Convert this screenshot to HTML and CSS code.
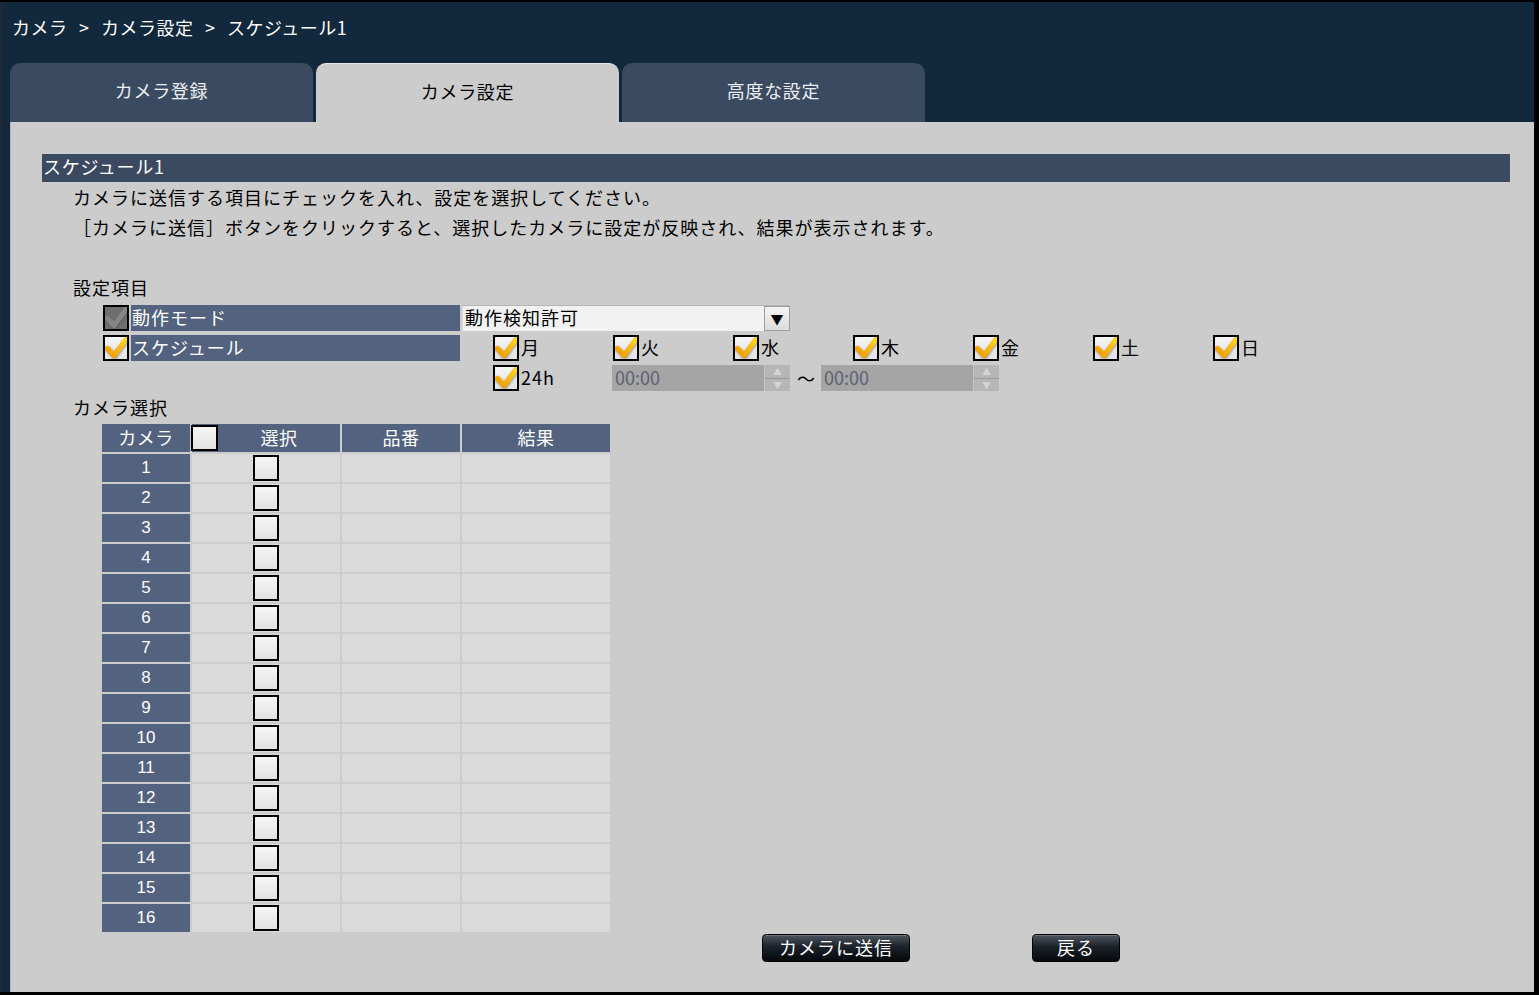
FILE: index.html
```html
<!DOCTYPE html>
<html lang="ja">
<head>
<meta charset="UTF-8">
<title>スケジュール1</title>
<link rel="stylesheet" href="styles.css">
</head>
<body>
<svg class="defs" width="0" height="0">
 <defs>
  <linearGradient id="ck-grad" x1="0" y1="1" x2="1" y2="0">
   <stop offset="0" stop-color="#f09a00"/>
   <stop offset="1" stop-color="#ffd41f"/>
  </linearGradient>
  <filter id="ck-blur" x="-20%" y="-20%" width="140%" height="140%"><feGaussianBlur stdDeviation="1"/></filter>
  <symbol id="check" viewBox="0 0 22 22">
   <path d="M2.5 11.5 L9 18.5 L21 2.5" fill="none" stroke="#000" stroke-opacity=".35" stroke-width="5.4" stroke-linecap="round" stroke-linejoin="round" filter="url(#ck-blur)" transform="translate(.6 1)"/>
   <path d="M2.5 11.5 L9 18.5 L21 2.5" fill="none" stroke="url(#ck-grad)" stroke-width="5.2" stroke-linecap="round" stroke-linejoin="round"/>
  </symbol>
  <symbol id="check-dis" viewBox="0 0 22 22">
   <path d="M2.5 11.5 L9 18.5 L21 2.5" fill="none" stroke="#000" stroke-opacity=".2" stroke-width="5.4" stroke-linecap="round" stroke-linejoin="round" filter="url(#ck-blur)" transform="translate(.6 1)"/>
   <path d="M2.5 11.5 L9 18.5 L21 2.5" fill="none" stroke="#868686" stroke-width="5.2" stroke-linecap="round" stroke-linejoin="round"/>
  </symbol>
 </defs>
</svg>
<div class="screen">
 <div class="app">
  <div class="header">
   <div class="breadcrumb">カメラ &gt; カメラ設定 &gt; スケジュール1</div>
   <div class="tabs">
    <div class="tab">カメラ登録</div>
    <div class="tab active">カメラ設定</div>
    <div class="tab">高度な設定</div>
   </div>
  </div>

  <div class="content">
   <div class="section-title">スケジュール1</div>
   <div class="desc">
    <div>カメラに送信する項目にチェックを入れ、設定を選択してください。</div>
    <div>［カメラに送信］ボタンをクリックすると、選択したカメラに設定が反映され、結果が表示されます。</div>
   </div>

   <div class="group-label first">設定項目</div>
   <div class="set-grid">
    <span class="cb dis"><svg><use href="#check-dis"/></svg></span>
    <div class="set-name">動作モード</div>
    <div class="select">
     <span class="select-text">動作検知許可</span>
     <span class="select-btn">▼</span>
    </div>

    <span class="cb"><svg><use href="#check"/></svg></span>
    <div class="set-name">スケジュール</div>
    <div class="days">
     <div class="day"><span class="cb"><svg><use href="#check"/></svg></span><span class="day-text">月</span></div>
     <div class="day"><span class="cb"><svg><use href="#check"/></svg></span><span class="day-text">火</span></div>
     <div class="day"><span class="cb"><svg><use href="#check"/></svg></span><span class="day-text">水</span></div>
     <div class="day"><span class="cb"><svg><use href="#check"/></svg></span><span class="day-text">木</span></div>
     <div class="day"><span class="cb"><svg><use href="#check"/></svg></span><span class="day-text">金</span></div>
     <div class="day"><span class="cb"><svg><use href="#check"/></svg></span><span class="day-text">土</span></div>
     <div class="day"><span class="cb"><svg><use href="#check"/></svg></span><span class="day-text">日</span></div>
    </div>

    <div class="days times">
     <div class="day"><span class="cb"><svg><use href="#check"/></svg></span><span class="day-text">24h</span></div>
     <div class="time">
      <span class="time-text">00:00</span>
      <span class="spin"><span class="spin-up">▲</span><span class="spin-down">▼</span></span>
     </div>
     <span class="tilde">～</span>
     <div class="time">
      <span class="time-text">00:00</span>
      <span class="spin"><span class="spin-up">▲</span><span class="spin-down">▼</span></span>
     </div>
    </div>
   </div>

   <div class="group-label">カメラ選択</div>
   <div class="cam-table">
    <div class="th">カメラ</div>
    <div class="th th-select"><span class="cb"></span><span class="th-text">選択</span></div>
    <div class="th">品番</div>
    <div class="th">結果</div>

    <div class="td-no">1</div><div class="td td-cb"><span class="cb"></span></div><div class="td"></div><div class="td"></div>
    <div class="td-no">2</div><div class="td td-cb"><span class="cb"></span></div><div class="td"></div><div class="td"></div>
    <div class="td-no">3</div><div class="td td-cb"><span class="cb"></span></div><div class="td"></div><div class="td"></div>
    <div class="td-no">4</div><div class="td td-cb"><span class="cb"></span></div><div class="td"></div><div class="td"></div>
    <div class="td-no">5</div><div class="td td-cb"><span class="cb"></span></div><div class="td"></div><div class="td"></div>
    <div class="td-no">6</div><div class="td td-cb"><span class="cb"></span></div><div class="td"></div><div class="td"></div>
    <div class="td-no">7</div><div class="td td-cb"><span class="cb"></span></div><div class="td"></div><div class="td"></div>
    <div class="td-no">8</div><div class="td td-cb"><span class="cb"></span></div><div class="td"></div><div class="td"></div>
    <div class="td-no">9</div><div class="td td-cb"><span class="cb"></span></div><div class="td"></div><div class="td"></div>
    <div class="td-no">10</div><div class="td td-cb"><span class="cb"></span></div><div class="td"></div><div class="td"></div>
    <div class="td-no">11</div><div class="td td-cb"><span class="cb"></span></div><div class="td"></div><div class="td"></div>
    <div class="td-no">12</div><div class="td td-cb"><span class="cb"></span></div><div class="td"></div><div class="td"></div>
    <div class="td-no">13</div><div class="td td-cb"><span class="cb"></span></div><div class="td"></div><div class="td"></div>
    <div class="td-no">14</div><div class="td td-cb"><span class="cb"></span></div><div class="td"></div><div class="td"></div>
    <div class="td-no">15</div><div class="td td-cb"><span class="cb"></span></div><div class="td"></div><div class="td"></div>
    <div class="td-no">16</div><div class="td td-cb"><span class="cb"></span></div><div class="td"></div><div class="td"></div>
   </div>

   <div class="buttons">
    <button class="btn btn-send">カメラに送信</button>
    <button class="btn btn-back">戻る</button>
   </div>
  </div>
 </div>
</div>
</body>
</html>
```

FILE: styles.css
```css
* {
 box-sizing: border-box;
}
body {
 margin: 0;
 background: #000000;
 font-family: "Noto Sans CJK JP", "Noto Sans", sans-serif;
 font-size: 18px;
 letter-spacing: 1px;
 color: #000000;
}
.defs {
 position: absolute;
 width: 0;
 height: 0;
}
.screen {
 width: 1539px;
 height: 995px;
 padding: 2px 5px 3px 0;
}
.app {
 height: 100%;
 display: flex;
 flex-direction: column;
 background: #12283c;
 border-left: 3px solid #1e2a38;
}

/* header: breadcrumb and tabs */
.header {
 height: 120px;
 padding-left: 7px;
 display: flex;
 flex-direction: column;
}
.breadcrumb {
 height: 61px;
 padding: 14px 0 0 2px;
 line-height: 22px;
 letter-spacing: 0.5px;
 word-spacing: 7px;
 color: #ffffff;
}
.tabs {
 height: 59px;
 display: flex;
 gap: 3px;
}
.tab {
 width: 303px;
 display: flex;
 align-items: center;
 justify-content: center;
 padding-bottom: 5px;
 border-radius: 10px 10px 0 0;
 background: #3a4a60;
 color: #eceff4;
 letter-spacing: 0.7px;
}
.tab.active {
 background: #cccccc;
 color: #000000;
 border-top: 1px solid #e6e6e6;
}

/* content */
.content {
 flex: 1;
 margin-left: 7px;
 padding: 32px 24px 0 31px;
 background: #cccccc;
 border-left: 1px solid #a9bccd;
}
.section-title {
 height: 28px;
 line-height: 25px;
 padding: 0 0 3px 1px;
 background: #3b4a61;
 color: #ffffff;
 letter-spacing: 0.7px;
}
.desc {
 padding-left: 31px;
 margin-top: 1px;
}
.desc div {
 line-height: 28px;
 padding-bottom: 2px;
}
.group-label {
 padding-left: 31px;
 line-height: 28px;
 padding-bottom: 2px;
 margin-top: 2px;
}
.group-label.first {
 margin-top: 30px;
}

/* checkbox */
.cb {
 width: 26px;
 height: 26px;
 flex: none;
 display: inline-flex;
 align-items: center;
 justify-content: center;
 border: 2px solid #000000;
 background: linear-gradient(#f6f6f6, #e2e2e2);
}
.cb svg {
 width: 22px;
 height: 22px;
 overflow: visible;
}
.cb.dis {
 background: #6f6f6f;
}

/* setting items */
.set-grid {
 display: grid;
 grid-template-columns: 26px 329px 1fr;
 grid-auto-rows: 26px;
 column-gap: 2px;
 row-gap: 4px;
 padding-left: 61px;
 margin-top: 2px;
}
.set-name {
 height: 26px;
 line-height: 24px;
 padding: 0 0 2px 1px;
 background: #53627e;
 color: #ffffff;
}
.select {
 width: 328px;
 height: 26px;
 display: flex;
 background: #f2f2f2;
 border-top: 1px solid #b4b4b4;
 border-left: 1px solid #d8d8d8;
}
.select-text {
 flex: 1;
 line-height: 23px;
 padding-left: 2px;
}
.select-btn {
 width: 26px;
 display: flex;
 align-items: center;
 justify-content: center;
 background: linear-gradient(#f4f4f4, #dcdcdc);
 border: 1px solid #9c9c9c;
 font-size: 13px;
 letter-spacing: 0;
}
.days {
 height: 26px;
 display: flex;
 padding-left: 31px;
}
.times {
 grid-column: 3;
 align-items: center;
}
.day {
 width: 120px;
 height: 26px;
 display: flex;
 align-items: center;
}
.day-text {
 line-height: 24px;
 padding: 0 0 2px 2px;
}
.time {
 width: 178px;
 height: 26px;
 display: flex;
 margin-left: -1px;
 background: #a5a5a5;
}
.time-text {
 flex: 1;
 line-height: 24px;
 padding-left: 3px;
 color: #5d6171;
 letter-spacing: 0;
}
.spin {
 width: 26px;
 display: flex;
 flex-direction: column;
 background: #b6b6b6;
 border-left: 1px solid #c4c4c4;
}
.spin span {
 flex: 1;
 display: flex;
 align-items: center;
 justify-content: center;
 font-size: 9px;
 color: #d4d4d4;
 letter-spacing: 0;
}
.spin-up {
 border-bottom: 1px solid #9a9a9a;
}
.tilde {
 width: 32px;
 line-height: 24px;
 text-align: center;
 letter-spacing: 0;
}

/* camera table */
.cam-table {
 display: grid;
 grid-template-columns: 88px 148px 118px 148px;
 grid-auto-rows: 28px;
 gap: 2px;
 margin: 1px 0 0 60px;
 width: 508px;
}
.th {
 display: flex;
 align-items: center;
 justify-content: center;
 padding-bottom: 2px;
 background: #53627e;
 color: #ffffff;
 letter-spacing: 0.5px;
}
.th-select {
 justify-content: flex-start;
 padding-bottom: 0;
}
.th-select .cb {
 width: 27px;
 margin-left: -1px;
}
.th-text {
 flex: 1;
 text-align: center;
 padding-bottom: 2px;
}
.td-no {
 display: flex;
 align-items: center;
 justify-content: center;
 background: #53627e;
 color: #ffffff;
 font-family: "Liberation Sans", "Noto Sans CJK JP", sans-serif;
 font-size: 17px;
 letter-spacing: 0;
}
.td {
 background: #dadada;
}
.td-cb {
 display: flex;
 align-items: center;
 justify-content: center;
}

/* buttons */
.buttons {
 display: flex;
 gap: 122px;
 margin-top: 2px;
 padding-left: 720px;
}
.btn {
 height: 28px;
 padding: 0 0 2px;
 border: 1px solid #050505;
 border-radius: 4px;
 background: linear-gradient(#4d5560, #1c2229 45%, #06090d);
 box-shadow: inset 0 1px 0 #6a717a;
 color: #ffffff;
 font-family: "Noto Sans CJK JP", sans-serif;
 font-size: 18px;
 letter-spacing: 1px;
 line-height: 22px;
}
.btn-send {
 width: 148px;
}
.btn-back {
 width: 88px;
}
```
